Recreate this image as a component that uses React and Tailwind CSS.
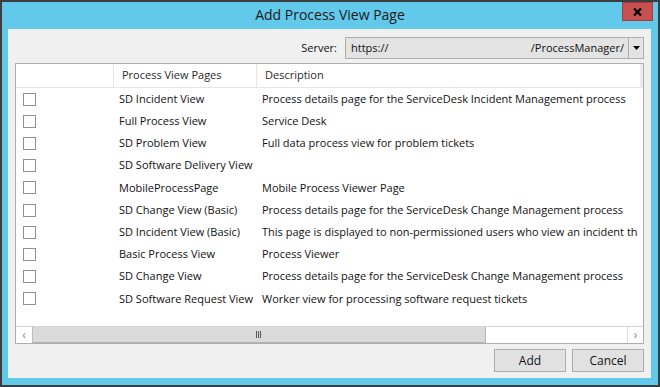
const rows = [
  { name: 'SD Incident View', desc: 'Process details page for the ServiceDesk Incident Management process' },
  { name: 'Full Process View', desc: 'Service Desk' },
  { name: 'SD Problem View', desc: 'Full data process view for problem tickets' },
  { name: 'SD Software Delivery View', desc: '' },
  { name: 'MobileProcessPage', desc: 'Mobile Process Viewer Page' },
  { name: 'SD Change View (Basic)', desc: 'Process details page for the ServiceDesk Change Management process' },
  { name: 'SD Incident View (Basic)', desc: 'This page is displayed to non-permissioned users who view an incident th' },
  { name: 'Basic Process View', desc: 'Process Viewer' },
  { name: 'SD Change View', desc: 'Process details page for the ServiceDesk Change Management process' },
  { name: 'SD Software Request View', desc: 'Worker view for processing software request tickets' },
];

function Checkbox() {
  return <span className="block w-[13px] h-[13px] border border-[#8f8f8f] bg-white" />;
}

export default function App() {
  return (
    <div className="w-[660px] h-[387px] bg-[#3b3e41] p-[2px] font-['Open_Sans',sans-serif] text-[11px] text-[#111]">
      <div className="h-full bg-[#62c9ea] flex flex-col">
        {/* Title bar */}
        <div className="relative h-[27px] shrink-0 flex items-center justify-center pb-[3px]">
          <span className="text-[14px] text-[#1b1b1b]">Add Process View Page</span>
          <button className="absolute top-0 right-[5px] w-[31px] h-[19px] bg-[#c75050] border border-[#a33c3c] flex items-center justify-center">
            <svg width="9" height="8" viewBox="0 0 9 8">
              <path d="M1 0.5 L8 7.5 M8 0.5 L1 7.5" stroke="#000" strokeWidth="2.2" />
            </svg>
          </button>
        </div>

        {/* Content */}
        <div className="flex-1 ml-[6px] mr-[7px] mb-[7px] bg-[#f0f0f0] px-[7px] pb-[6px] flex flex-col">
          {/* Server */}
          <div className="mt-[8px] h-[22px] flex items-center justify-end gap-[8px]">
            <span>Server:</span>
            <div className="w-[299px] h-full border border-[#acacac] bg-[#e3e3e3] flex">
              <div className="flex-1 flex items-center justify-between pl-[5px] pr-[4px]">
                <span>https://</span>
                <span>/ProcessManager/</span>
              </div>
              <div className="w-[15px] border-l border-[#acacac] flex items-center justify-center">
                <svg width="7" height="4" viewBox="0 0 7 4">
                  <path d="M0 0 H7 L3.5 4 Z" fill="#000" />
                </svg>
              </div>
            </div>
          </div>

          {/* Table */}
          <div className="mt-[4px] h-[281px] border border-[#adadad] bg-white flex flex-col overflow-hidden">
            <div className="h-[24px] shrink-0 flex border-b border-[#e5e5e5] text-[#2a2a2a]">
              <div className="w-[98px] border-r border-[#e5e5e5]" />
              <div className="w-[143px] border-r border-[#e5e5e5] flex items-center pl-[8px]">Process View Pages</div>
              <div className="flex-1 flex items-center pl-[8px]">Description</div>
              <div className="w-[3px] bg-[#ececec]" />
            </div>

            <div className="flex-1 overflow-hidden">
              {rows.map((r) => (
                <div key={r.name} className="h-[22.2px] flex items-center whitespace-nowrap">
                  <div className="w-[97px] shrink-0 pl-[7px]">
                    <Checkbox />
                  </div>
                  <div className="w-[143px] shrink-0 pl-[6px]">{r.name}</div>
                  <div className="flex-1 pl-[6px] overflow-hidden">{r.desc}</div>
                </div>
              ))}
            </div>

            {/* Horizontal scrollbar */}
            <div className="h-[17px] shrink-0 flex border-t border-[#d4d4d4] bg-white">
              <div className="w-[17px] flex items-center justify-center text-[#8a8a8a] text-[12px] border-r border-[#bdbdbd]">‹</div>
              <div className="w-[453px] bg-[#dadada] border-r border-b border-[#b4b4b4] flex items-center justify-center">
                <svg width="6" height="7" viewBox="0 0 6 7">
                  <path d="M0.5 0 V7 M2.5 0 V7 M4.5 0 V7" stroke="#555" strokeWidth="1" />
                </svg>
              </div>
              <div className="flex-1" />
              <div className="w-[16px] flex items-center justify-center text-[#8a8a8a] text-[12px] border-l border-[#dcdcdc]">›</div>
            </div>
          </div>

          {/* Buttons */}
          <div className="mt-[5px] flex justify-end gap-[6px]">
            <button className="w-[72px] h-[23px] border border-[#adadad] bg-[#e1e1e1] text-[12px]">Add</button>
            <button className="w-[72px] h-[23px] border border-[#adadad] bg-[#e1e1e1] text-[12px]">Cancel</button>
          </div>
        </div>
      </div>
    </div>
  );
}
